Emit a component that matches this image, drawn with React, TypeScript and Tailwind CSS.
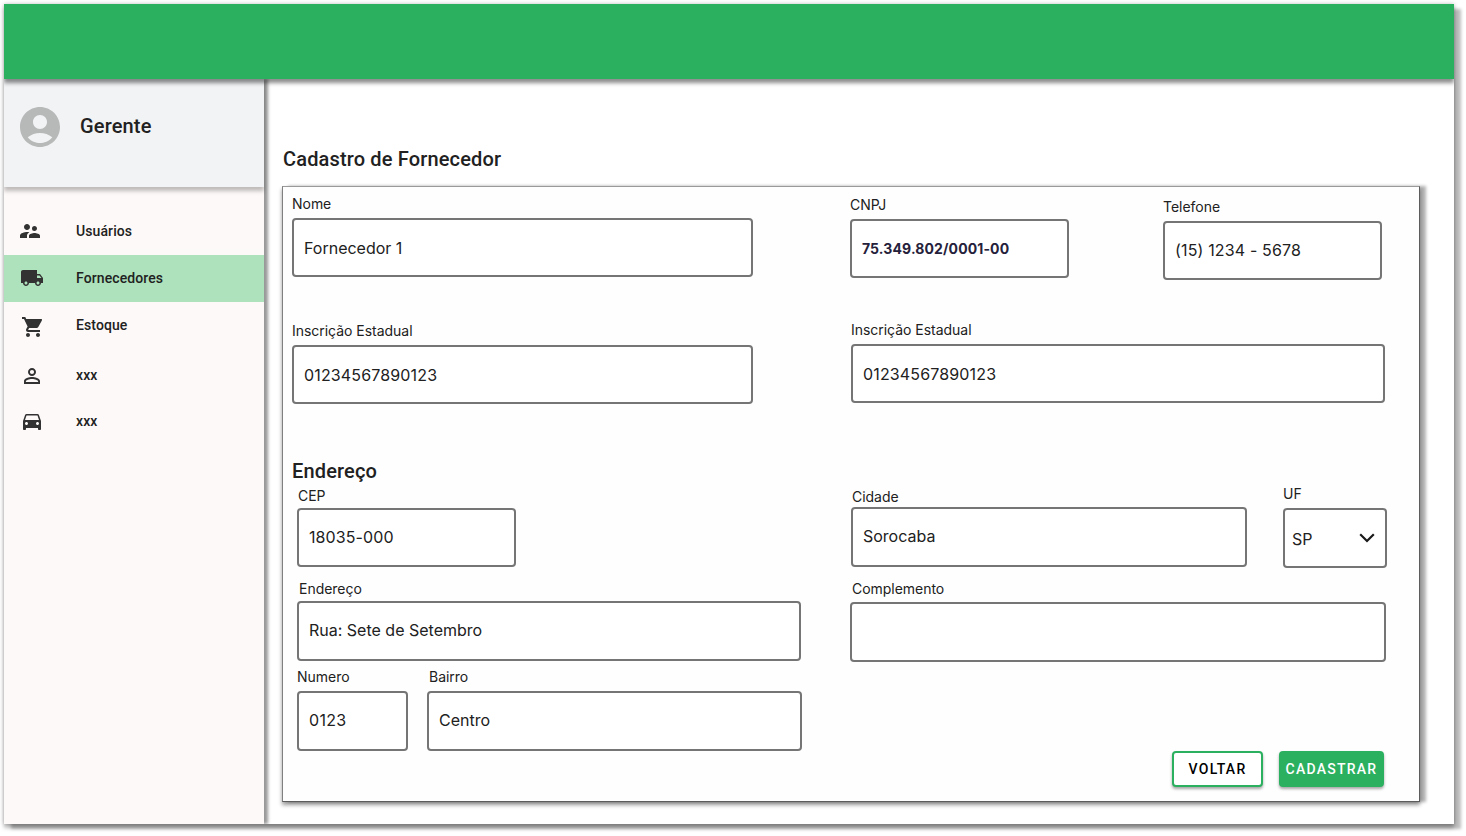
import type { ReactNode } from 'react';
import {
  MdAccountCircle,
  MdDirectionsCar,
  MdLocalShipping,
  MdPersonOutline,
  MdShoppingCart,
  MdSupervisorAccount,
} from 'react-icons/md';

type FieldProps = {
  label: string;
  value?: string;
  className: string;
  labelClass?: string;
  boxClass?: string;
  children?: ReactNode;
};

function Field({ label, value, className, labelClass = '', boxClass = 'h-[59px] pb-0', children }: FieldProps) {
  return (
    <div className={`flex shrink-0 flex-col ${className}`}>
      <label className={`h-5 text-sm leading-5 tracking-[-0.03px] whitespace-nowrap ${labelClass}`}>{label}</label>
      <div className={`flex items-center rounded-[4px] border-2 border-[#757575] bg-white pl-2.5 ${boxClass}`}>
        {children ?? <span>{value}</span>}
      </div>
    </div>
  );
}

type ItemProps = { icon: ReactNode; label: string; className: string };

function NavItem({ icon, label, className }: ItemProps) {
  return (
    <li className={`flex items-center pl-4 ${className}`}>
      <span className="flex w-14 text-[#323232]">{icon}</span>
      <span>{label}</span>
    </li>
  );
}

export default function App() {
  return (
    <div className="h-[836px] w-[1466px] overflow-hidden bg-white p-1 font-['Inter',sans-serif] text-base text-[#212121]">
      <div className="flex h-[820px] w-[1450px] flex-col bg-white shadow-[7px_5px_3px_rgba(0,0,0,0.26),0_4px_4px_rgba(0,0,0,0.25),0_0_4px_rgba(0,0,0,0.25)]">
        <header className="relative z-20 h-[75px] shrink-0 bg-[#2bb060] shadow-[0_4px_4px_rgba(0,0,0,0.45)] [clip-path:inset(0_0_-10px_0)]" />
        <div className="flex flex-1">
          <aside className="relative z-10 flex w-[260px] shrink-0 flex-col bg-[#fdf9f8] font-['Roboto',sans-serif] font-medium shadow-[4px_0_3px_rgba(0,0,0,0.4)] [clip-path:inset(0_-10px_0_0)]">
            <div className="flex h-[108px] gap-4 bg-[#f1f3f5] pt-6 pl-3 shadow-[0_4px_4px_rgba(0,0,0,0.25)]">
              <MdAccountCircle className="size-12 text-[#b7b9b8]" />
              <span className="pt-[11px] text-xl leading-6 tracking-[0.15px]">Gerente</span>
            </div>
            <ul className="flex flex-col pt-[21px] text-sm tracking-[0.1px]">
              <NavItem className="h-[47px] pb-px" label="Usuários" icon={<MdSupervisorAccount className="-ml-0.5 size-6" />} />
              <NavItem className="h-[47px] bg-[#aee2bc] pb-px" label="Fornecedores" icon={<MdLocalShipping className="size-6" />} />
              <NavItem className="h-[47px] pb-px" label="Estoque" icon={<MdShoppingCart className="mt-1 ml-px size-6" />} />
              <NavItem className="h-[54px] pb-0.5" label="xxx" icon={<MdPersonOutline className="mt-0.5 size-6" />} />
              <NavItem className="h-[38px] pb-0.5" label="xxx" icon={<MdDirectionsCar className="size-6" />} />
            </ul>
          </aside>
          <main className="flex flex-col pt-[66px] pl-[18px]">
            <h1 className="h-[41px] pl-px font-['Roboto',sans-serif] text-xl leading-7 font-medium tracking-[0.15px]">Cadastro de Fornecedor</h1>
            <section className="flex h-[616px] w-[1138px] flex-col border border-t-[#9a9a9a] border-r-[#5c5c5c] border-b-[#5c5c5c] border-l-[#808080] bg-[#fefefe] pt-[7px] pl-[9px] shadow-[0_3px_4px_rgba(0,0,0,0.4),6px_0_3px_rgba(0,0,0,0.3)]">
              <div className="flex h-[126px] items-start">
                <Field label="Nome" value="Fornecedor 1" className="w-[461px] gap-1" />
                <Field label="CNPJ" className="mt-px ml-[97px] w-[219px] gap-1">
                  <span className="text-sm font-bold tracking-[0.12px] text-[#25213b]">75.349.802/0001-00</span>
                </Field>
                <Field label="Telefone" className="mt-[3px] ml-[94px] w-[219px] gap-1" boxClass="h-[59px] pb-px">
                  <span className="tracking-[0.15px]">(15) 1234 - 5678</span>
                </Field>
              </div>
              <div className="flex h-[137px] items-start">
                <Field label="Inscrição Estadual" className="mt-px w-[461px] gap-1">
                  <span className="tracking-[0.15px]">01234567890123</span>
                </Field>
                <Field label="Inscrição Estadual" className="ml-[98px] w-[534px] gap-1">
                  <span className="tracking-[0.15px]">01234567890123</span>
                </Field>
              </div>
              <h2 className="h-[27px] font-['Roboto',sans-serif] text-xl leading-7 font-medium tracking-[0.15px]">Endereço</h2>
              <div className="flex h-[95px] items-start pl-[5px]">
                <Field label="CEP" className="mt-0.5 w-[219px] gap-0.5" labelClass="pl-px" boxClass="h-[59px] pb-px">
                  <span className="tracking-[0.1px]">18035-000</span>
                </Field>
                <Field label="Cidade" value="Sorocaba" className="mt-[3px] ml-[335px] w-[396px]" labelClass="pl-px" boxClass="h-[60px] pb-0.5" />
                <Field label="UF" className="ml-9 w-[104px] gap-1" boxClass="h-[60px] justify-between !pl-[7px] pr-[10px]">
                  <span className="pt-0.5">SP</span>
                  <svg width="16" height="10" viewBox="0 0 16 10" fill="none" stroke="#1a1a1a" strokeWidth="2.2">
                    <path d="M1.2 1.2 8 8 14.8 1.2" />
                  </svg>
                </Field>
              </div>
              <div className="flex h-[88px] items-start pl-[5px]">
                <Field label="Endereço" value="Rua: Sete de Setembro" className="w-[504px] gap-0.5" labelClass="pl-0.5" boxClass="h-[60px] pb-0.5" />
                <Field label="Complemento" value="" className="ml-[49px] w-[536px] gap-[3px]" labelClass="pl-0.5" boxClass="h-[60px]" />
              </div>
              <div className="flex h-[84px] items-start pl-[5px]">
                <Field label="Numero" className="w-[111px] gap-1" boxClass="h-[60px] pb-0.5">
                  <span className="tracking-[0.3px]">0123</span>
                </Field>
                <Field label="Bairro" value="Centro" className="ml-[19px] w-[375px] gap-1" labelClass="pl-0.5" boxClass="h-[60px] pb-0.5" />
              </div>
              <div className="flex justify-end gap-4 pr-[35px] font-['Roboto',sans-serif] text-sm font-medium tracking-[1.25px]">
                <button className="h-9 w-[91px] rounded-[4px] border-2 border-[#2bb060] bg-white text-black shadow-[0_2px_3px_rgba(0,0,0,0.35)]">VOLTAR</button>
                <button className="h-9 w-[105px] rounded-[4px] bg-[#2bb060] text-white shadow-[0_2px_3px_rgba(0,0,0,0.35)]">CADASTRAR</button>
              </div>
            </section>
          </main>
        </div>
      </div>
    </div>
  );
}
